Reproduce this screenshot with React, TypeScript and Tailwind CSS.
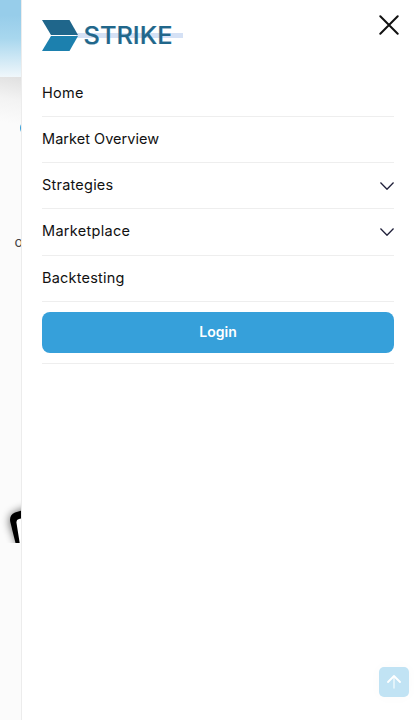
type Item = { label: string; row: string; tracking: string; expandable?: boolean };

const items: Item[] = [
  { label: "Home", row: "h-[47px]", tracking: "tracking-[0.3px]" },
  { label: "Market Overview", row: "h-[46px] pb-[2px]", tracking: "tracking-[0.03px]" },
  { label: "Strategies", row: "h-[46px] pb-[2px]", tracking: "tracking-[0.22px]", expandable: true },
  { label: "Marketplace", row: "h-[47px] pb-[2px]", tracking: "tracking-[0.3px]", expandable: true },
  { label: "Backtesting", row: "h-[46px] pb-[2px]", tracking: "tracking-[0.22px]" },
];

function Logo() {
  return (
    <svg width="141" height="31" viewBox="0 0 141 31" role="img" aria-label="Strike">
      <rect x="34" y="13" width="107" height="5" fill="#d5e1f5" />
      <path d="M0 0H27.5L36 15H9Z" fill="#1f668b" />
      <path d="M9 16H36L27.5 31H0Z" fill="#1c80ae" />
      <text x="41.5" y="24" fontSize="24" fontWeight="500" fill="#21678b" stroke="#21678b" strokeWidth="0.2" textLength="89" lengthAdjust="spacingAndGlyphs" className="font-['Inter',sans-serif]">
        STRIKE
      </text>
    </svg>
  );
}

function Chevron() {
  return (
    <svg width="14" height="8" viewBox="0 0 14 8" fill="none" className="mt-[2px]">
      <path d="M0.4 0.5L7 7.2L13.6 0.5" stroke="#20203a" strokeWidth="1.4" />
    </svg>
  );
}

function Backdrop() {
  return (
    <div className="relative w-[21px] shrink-0 overflow-hidden bg-[#fbfbfb]">
      <div className="h-[77px] bg-linear-to-b from-[#97cdea] from-20% via-[#a8d7ee] via-50% to-[#f0f7fb]" />
      <div className="h-[50px] bg-linear-[190deg] from-[#e0e0e0] via-[#f3f3f3] via-45% to-[#fbfbfb] to-90%" />
      <div className="absolute top-[121px] left-[20px] size-[14px] rounded-full bg-[#36a0da]" />
      <span className="absolute top-[232px] left-[14.5px] text-[14px] leading-[20px] text-[#444]">o</span>
      <svg className="absolute top-[493px] left-0" width="21" height="50" viewBox="0 0 21 50" fill="none">
        <defs>
          <filter id="soft" x="-100%" y="-50%" width="300%" height="200%">
            <feGaussianBlur stdDeviation="4" />
          </filter>
        </defs>
        <path d="M19 55L10 32Q8 22 16 19L30 14V55Z" fill="#000" opacity=".6" filter="url(#soft)" />
        <path d="M16 52L10.3 29Q9 22 15 19.5L24 17V52Z" fill="#000" />
        <path d="M20 52L16.5 30Q16 26.5 19 26L24 25V52Z" fill="#fff" />
      </svg>
    </div>
  );
}

export default function App() {
  return (
    <div className="relative flex h-[720px] w-[414px] overflow-hidden bg-white font-['Inter','Open_Sans',sans-serif] text-[#111]">
      <Backdrop />
      <aside className="flex flex-1 flex-col border-l border-[#ececec] bg-white pr-5 pl-5">
        <header className="flex h-[70px] items-start justify-between pt-5">
          <Logo />
          <button aria-label="Close menu" className="-mt-[5px] -mr-[5px]">
            <svg width="20" height="20" viewBox="0 0 20 20" fill="none">
              <path d="M1.3 1.3L18.7 18.7M18.7 1.3L1.3 18.7" stroke="#111" strokeWidth="2" strokeLinecap="round" />
            </svg>
          </button>
        </header>
        <nav>
          {items.map((item) => (
            <a key={item.label} className={`flex items-center justify-between border-b border-[#eeeeee] ${item.row}`}>
              <span className={`text-[14.5px] leading-[20px] ${item.tracking}`}>{item.label}</span>
              {item.expandable && <Chevron />}
            </a>
          ))}
          <div className="border-b border-[#eeeeee] py-[10px]">
            <button className="block h-[41px] w-full rounded-lg bg-[#36a0da] pb-[2px] text-[14px] font-semibold text-white">Login</button>
          </div>
        </nav>
      </aside>
      <button aria-label="Back to top" className="absolute top-[667px] left-[379px] flex size-[30px] items-center justify-center rounded-[5px] bg-[#c1e3f4] shadow-[0_0_14px_rgba(0,0,0,0.025)]">
        <svg width="14" height="14" viewBox="0 0 14 14" fill="none">
          <path d="M7 1.5V13.5" stroke="#e5f4fb" strokeWidth="1.8" />
          <path d="M1 7L7 1L13 7" stroke="#fff" strokeWidth="1.8" strokeLinecap="round" strokeLinejoin="round" />
        </svg>
      </button>
    </div>
  );
}
